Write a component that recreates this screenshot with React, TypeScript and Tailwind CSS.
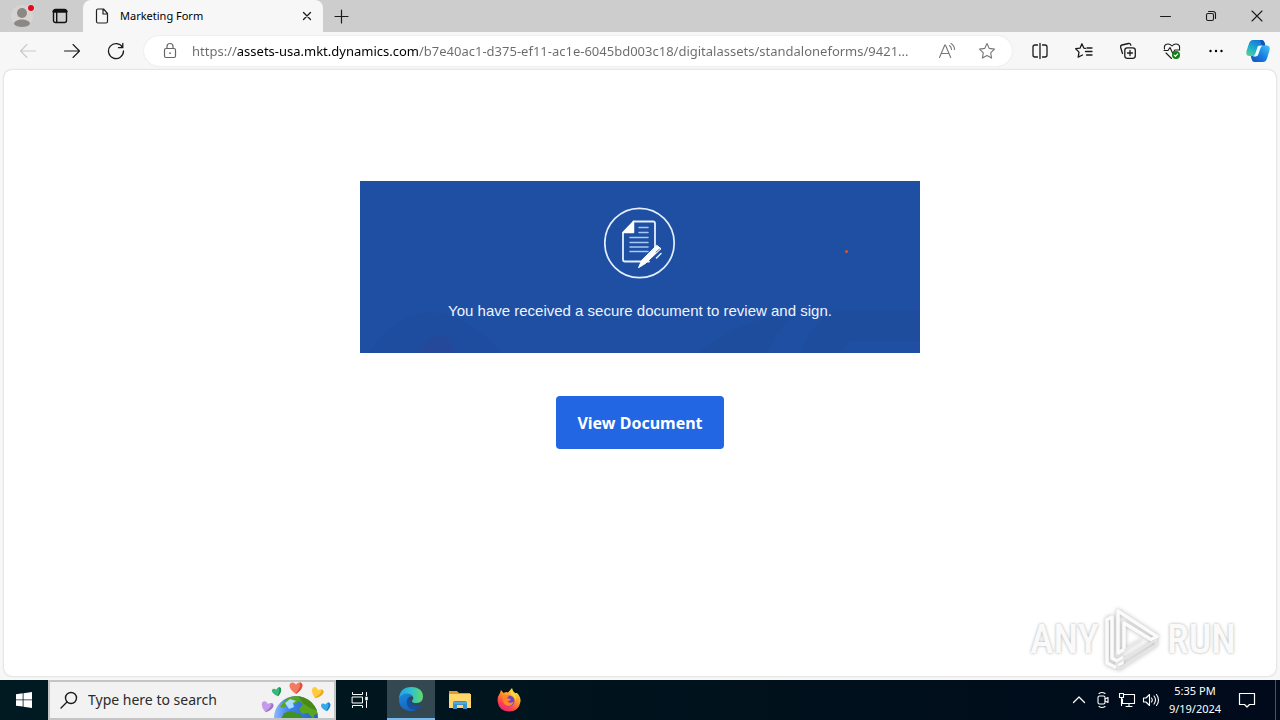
import type { ReactNode } from "react";

function IconButton({ label, className = "w-11", children }: { label: string; className?: string; children: ReactNode }) {
  return (
    <button type="button" aria-label={label} className={`flex h-full shrink-0 items-center justify-center ${className}`}>
      {children}
    </button>
  );
}

function Line({ size = 18, color = "#1b1b1b", width = 1.1, children }: { size?: number; color?: string; width?: number; children: ReactNode }) {
  return (
    <svg width={size} height={size} viewBox={`0 0 ${size} ${size}`} fill="none" stroke={color} strokeWidth={width} strokeLinecap="round" strokeLinejoin="round" aria-hidden="true">
      {children}
    </svg>
  );
}

function TabStrip() {
  return (
    <header className="flex h-8 items-stretch bg-[#cdcdcd]">
      <IconButton label="Profile">
        <svg width="28" height="28" viewBox="0 0 28 28" aria-hidden="true">
          <circle cx="14" cy="14" r="11" fill="#d6d3d1" />
          <circle cx="14" cy="11" r="5" fill="#8c8886" />
          <path d="M6 22c0-6 16-6 16 0c-2 4-14 4-16 0z" fill="#8c8886" />
          <circle cx="23" cy="6" r="3.6" fill="#dedede" />
          <circle cx="23" cy="6" r="3" fill="#e00b1c" />
        </svg>
      </IconButton>
      <IconButton label="Tab actions" className="w-8">
        <Line size={16} width={1.4} color="#111">
          <rect x="1.5" y="1.5" width="13" height="13" rx="2" />
          <path d="M2 3.2h12" strokeWidth="3" />
          <path d="M4.7 4v10" />
        </Line>
      </IconButton>
      <div className="ml-[7px] flex w-60 items-center gap-2.5 rounded-t-lg bg-[#f7f7f7] pl-[11px]">
        <Line size={16} color="#222" width={1.2}>
          <path d="M2.5 2.5q0-1.5 1.5-1.5h5.500l4 4.500v8q0 1.500-1.500 1.500h-8q-1.500 0-1.500-1.500zM9 1v5h4.500" />
        </Line>
        <span className="flex-1 text-[11px] text-black">Marketing Form</span>
        <IconButton label="Close tab" className="w-8">
          <Line size={10} width={1.3}><path d="M1.500 1.500l7 7M8.500 1.500l-7 7" /></Line>
        </IconButton>
      </div>
      <IconButton label="New tab" className="w-9">
        <Line size={15} width={1.2}><path d="M7.500 1v13M1 7.500h13" /></Line>
      </IconButton>
      <div className="flex-1" />
      <IconButton label="Minimize" className="w-[46px]">
        <Line size={11} width={1}><path d="M.5 5.500h10" /></Line>
      </IconButton>
      <IconButton label="Restore" className="w-[46px]">
        <Line size={12}>
          <rect x="1.500" y="3.500" width="7" height="7" rx="1.500" />
          <path d="M3.500 1.500h4.500q2.500 0 2.500 2.500v4.500" />
        </Line>
      </IconButton>
      <IconButton label="Close" className="w-[46px]">
        <Line size={12}><path d="M1 1l10 10M11 1l-10 10" /></Line>
      </IconButton>
    </header>
  );
}

function Copilot() {
  return (
    <svg width="26" height="26" viewBox="0 0 26 26" aria-hidden="true">
      <defs>
        <linearGradient id="cpA" x1="0" y1="1" x2="0.600" y2="0">
          <stop offset="0" stopColor="#63d48a" />
          <stop offset=".45" stopColor="#20b4c6" />
          <stop offset="1" stopColor="#1478d8" />
        </linearGradient>
        <linearGradient id="cpB" x1="0" y1="1" x2="1" y2="0">
          <stop offset="0" stopColor="#124fb8" />
          <stop offset=".5" stopColor="#1880e4" />
          <stop offset="1" stopColor="#45c6f5" />
        </linearGradient>
      </defs>
      <path d="M8 2h8.500q2 0 2.800 2.500l.9 3h-3q-2.200 0-3 2.400l-2 5.600q-.8 2.500-3 2.500H4.500Q.3 18 1.500 13L4 5.500Q5.200 2 8 2z" fill="url(#cpA)" />
      <path d="M18 24H9.500q-2 0-2.800-2.500l-.9-3.500h3.500q2 0 2.900-2.500l2-5.500q.8-2.500 3-2.500h4.300q4.200 0 3 5L22 20.500Q20.800 24 18 24z" fill="url(#cpB)" />
      <path d="M15 2h2q2 0 2.600 2.500l.8 3h-3.600z" fill="#1653b4" />
      <path d="M13.500 7.800h4q-1.600.8-2.200 2.700l-2 6q-.7 1.800-2.600 2H8q1.500-.6 2.200-2.500l2-6q.4-1.600 1.300-2.200z" fill="#f3faff" />
    </svg>
  );
}

const pageUrl = "https://assets-usa.mkt.dynamics.com/b7e40ac1-d375-ef11-ac1e-6045bd003c18/digitalassets/standaloneforms/9421...";

function Toolbar() {
  return (
    <div className="flex h-[38px] items-center pl-1.5 pr-0.5">
      <IconButton label="Back">
        <Line color="#c9c9c9"><path d="M1.500 9h15M8 2.500L1.500 9L8 15.500" /></Line>
      </IconButton>
      <IconButton label="Forward">
        <Line><path d="M1.500 9h15M10 2.500L16.500 9L10 15.500" /></Line>
      </IconButton>
      <IconButton label="Refresh">
        <Line width={1.300}><path d="M15.600 5.500A7.500 7.500 0 1 0 16.500 9M15.800 1.500v4.200h-4.300" /></Line>
      </IconButton>
      <div className="mx-1.5 flex h-[30px] min-w-0 flex-1 items-center gap-3 rounded-full bg-white pl-4 pr-[5px] shadow-[0_0_2px_#dcdcdc]">
        <Line size={20} color="#666" width={1.200}>
          <rect x="4.500" y="7.500" width="11" height="9" rx="1.500" />
          <path d="M7 7.500V5.500a3 3 0 0 1 6 0v2" />
          <path d="M10 12v.2" strokeWidth="1.700" />
        </Line>
        <input
          aria-label="Address"
          readOnly
          value={pageUrl}
          className="h-6 min-w-0 flex-1 bg-[linear-gradient(to_right,#6b6b6b_44px,#000_44px,#000_226px,#6b6b6b_226px)] bg-clip-text text-[13px] text-transparent outline-none"
        />
        <div className="flex h-full">
          <IconButton label="Read aloud" className="w-10">
            <Line color="#777"><path d="M1.500 15.500L6.800 3h.6l5.300 12.500M3.300 11.500h7.600M11.500 3.500q2 1.500 2 4M13 1.500q3.500 2 3.500 6" /></Line>
          </IconButton>
          <IconButton label="Add to favorites" className="w-10">
            <Line color="#777"><path d="M9 1.500l2.300 4.900 5.200.7-3.800 3.700.9 5.300L9 13.600l-4.600 2.500.9-5.300-3.800-3.700 5.200-.7z" /></Line>
          </IconButton>
        </div>
      </div>
      <IconButton label="Split screen">
        <Line width={1.300}><path d="M6.500 3H4q-2 0-2 2v8q0 2 2 2h2.500M9 1.500v15M11.500 3H14q2 0 2 2v8q0 2-2 2h-2.500" /></Line>
      </IconButton>
      <IconButton label="Favorites">
        <Line width={1.300}><path d="M10.500 6.300L8.800 6.100 6.900 1.800 5 6.200l-4.300.5 3.300 3.400-.8 5L7.500 13M12 6h5M10.500 9.500H17M11.500 13H17" /></Line>
      </IconButton>
      <IconButton label="Collections">
        <Line width={1.300}>
          <rect x="5.800" y="5.800" width="10.500" height="10.500" rx="2.500" />
          <path d="M11 8.500v5M8.500 11h5M3.500 11.500L1.700 5.500Q1.200 3.500 3 3l6.500-1.500q1.800-.3 2.400 1.700" />
        </Line>
      </IconButton>
      <IconButton label="Browser essentials">
        <Line>
          <path d="M1.500 7Q.8 3.200 3.500 2.300 6.500 1.300 9 4q2.500-2.700 5.500-1.700 2.700.9 2 4.700M1 8.500h4l2-3 2.800 6 2-3.500h5M3 11l5.500 5.500" />
          <circle cx="13" cy="13" r="4" fill="#128012" stroke="none" />
          <path d="M11.200 13.200l1.200 1.200 2.300-2.500" stroke="#fff" />
        </Line>
      </IconButton>
      <IconButton label="Settings and more">
        <svg width="18" height="4" viewBox="0 0 18 4" aria-hidden="true">
          <circle cx="3.500" cy="2" r="1.200" /><circle cx="9" cy="2" r="1.200" /><circle cx="14.500" cy="2" r="1.200" />
        </svg>
      </IconButton>
      <IconButton label="Copilot" className="w-10"><Copilot /></IconButton>
    </div>
  );
}

function SignIcon() {
  return (
    <svg width="72" height="72" viewBox="0 0 72 72" fill="none" stroke="#e3efff" strokeLinejoin="round" strokeLinecap="round" aria-hidden="true">
      <circle cx="35.500" cy="36" r="34.700" strokeWidth="1.700" />
      <path d="M29.500 14.500H49q2 0 2 2V43M45 54.500H21q-2 0-2-2V26" strokeWidth="1.800" />
      <path d="M19 25.500L29.500 14.500v11z" fill="#fff" stroke="#fff" strokeWidth="1.500" />
      <path d="M35 20.500h9M35 25.500h9M26 30.500h18M26 35.500h18M26 40h18M26 44.500h18" stroke="#a9c8f5" strokeWidth="1.500" />
      <path d="M53 38.500l4 3.200-16 15-6.500 4 3-7z" fill="#fff" stroke="#fff" />
      <path d="M57 46.500l-4.500 4.500" strokeWidth="1.500" />
      <path d="M52 45l3.500-3" stroke="#315da8" strokeWidth=".8" />
    </svg>
  );
}

function Watermark() {
  return (
    <div aria-label="ANY RUN" className="absolute bottom-1 right-10 flex items-center gap-1 font-['Liberation_Sans_Narrow','Roboto_Condensed',sans-serif] text-[40px] font-medium leading-none text-[#fafafa] [text-shadow:0_0_3px_#aaa]">
      <span>ANY</span>
      <svg width="60" height="64" viewBox="0 0 60 64" fill="none" stroke="#fbfbfb" strokeWidth="3.500" strokeLinejoin="round" className="drop-shadow-[0_0_2px_#b0b0b0]" aria-hidden="true">
        <path d="M15 3v42l6-3.500V15l27 16.500 6-3z" />
        <path d="M9 9l-5 2.500V55l8 4 7-4V50l-5 3-5-3z" />
        <path d="M13 56l40-24v5L16 61z" stroke="#e5e5e5" strokeWidth="2.500" />
        <path d="M21 42l18-10.500" stroke="#e8e8e8" strokeWidth="2" />
      </svg>
      <span>RUN</span>
    </div>
  );
}

function Page() {
  return (
    <main className="relative mx-1 mb-1 flex flex-1 flex-col items-center rounded-lg bg-white pt-[111px] shadow-[0_0_2px_#b5b5b5]">
      <section className="relative flex h-[172px] w-full max-w-[560px] flex-col items-center overflow-hidden bg-[#1e4fa2] pt-[26px]">
        <svg className="absolute inset-x-0 bottom-0 h-12 w-full" viewBox="0 0 559 48" preserveAspectRatio="none" aria-hidden="true">
          <path d="M8 48Q40 4 76 8T140 48z" fill="#1d4b9b" opacity=".4" />
          <path d="M60 48q18-36 36 0z" fill="#343f94" opacity=".35" />
          <path d="M410 12q-40 10-74 36h70q8-22 26-36zM440 48q10-30 34-42h85v30h-70l-12 12z" fill="#1d4b98" opacity=".5" />
        </svg>
        <span className="absolute right-[72px] top-[69px] size-[3px] rounded-full bg-[#d0583a]" />
        <div className="relative"><SignIcon /></div>
        <p className="relative mt-5 text-center font-['Liberation_Sans',Arial,sans-serif] text-[15px] leading-6 text-[#eef3ff]">
          You have received a secure document to review and sign.
        </p>
      </section>
      <button type="button" className="mt-[43px] h-[53px] rounded bg-[#2266e3] px-[21px] text-base font-bold text-white">
        View Document
      </button>
      <Watermark />
    </main>
  );
}

function Heart({ x, y, r, s, color, shade }: { x: number; y: number; r: number; s: number; color: string; shade: string }) {
  return (
    <g transform={`translate(${x} ${y}) rotate(${r}) scale(${s})`}>
      <path d="M0 5.500C-8 0-6.500-5-3.300-5-1.200-5 0-3 0-3S1.200-5 3.300-5C6.500-5 8 0 0 5.500z" fill={color} />
      <path d="M0 5.500C8 0 6.500-5 3.300-5 5 0 0 3 0 5.500z" fill={shade} />
    </g>
  );
}

function EarthArt() {
  return (
    <svg width="74" height="38" viewBox="0 0 74 38" className="shrink-0" aria-hidden="true">
      <defs>
        <linearGradient id="sea"><stop offset="0" stopColor="#8eb7ff" /><stop offset=".35" stopColor="#3f82e8" /><stop offset="1" stopColor="#2464bd" /></linearGradient>
        <clipPath id="globe"><circle cx="36" cy="37" r="22" /></clipPath>
      </defs>
      <circle cx="36" cy="37" r="22" fill="url(#sea)" />
      <g clipPath="url(#globe)">
        <path d="M26 18q10-6 22 0 9 7 11 16l-4-1-2 5-5-6-6 1-3-5 4-5-4-3-4 3-6-1-5 5-4-1z" fill="#5aa51f" />
        <path d="M38 15q14 2 20 15l-8-3-7-5z" fill="#478a16" />
        <path d="M24 32l7-2 9 3 4 5H21z" fill="#3f9123" />
        <path d="M25 22l5-4 6 2-3 2 1 4-5 2z" fill="#a9dcff" />
      </g>
      <Heart x={7} y={26} r={15} s={1} color="#c49be8" shade="#9d72c8" />
      <Heart x={17} y={11} r={-15} s={0.8} color="#35b878" shade="#198f58" />
      <Heart x={36} y={7} r={0} s={1.1} color="#f47b62" shade="#dd523f" />
      <Heart x={57} y={12} r={20} s={1} color="#ffcb3d" shade="#eea51c" />
      <Heart x={66} y={26} r={-10} s={0.8} color="#35a8eb" shade="#187bc5" />
    </svg>
  );
}

function EdgeLogo() {
  return (
    <svg width="26" height="26" viewBox="0 0 26 26" aria-hidden="true">
      <defs>
        <linearGradient id="edTop" x1="0" x2="1"><stop offset="0" stopColor="#2c9fe4" /><stop offset=".5" stopColor="#2fc1cf" /><stop offset="1" stopColor="#62dc65" /></linearGradient>
        <linearGradient id="edLow" x1="0" y1="0" x2=".5" y2="1"><stop offset="0" stopColor="#188be0" /><stop offset="1" stopColor="#1764bd" /></linearGradient>
      </defs>
      <path d="M1 13Q1.500 1 13.500 1 25 1.500 25 11q-.5 6-7 6-4 0-4-2c0-1 2-1.500 1-4Q13.500 8 9 8q-5 0-8 5z" fill="url(#edTop)" />
      <path d="M1 13Q3.500 7.500 9 7.500q4 0 5.500 2.500Q9 11 9 16.500q1 7.500 10 7-2.500 1.500-6 1.500Q1 24.500 1 13z" fill="url(#edLow)" />
      <path d="M12.500 10.300Q8.500 12 8.800 16.500C9.500 24 17.500 26.500 23.300 20q1-1.500-.8-.8-5.500 1.800-9-1.500Q10.500 14 12.500 10.300z" fill="#154f9d" />
    </svg>
  );
}

function ExplorerLogo() {
  return (
    <svg width="24" height="22" viewBox="0 0 24 22" aria-hidden="true">
      <path d="M1 2h8l2 2h11v4H1z" fill="#e29a2b" />
      <path d="M1 5h22v14H1z" fill="#ffd76a" />
      <path d="M5 20v-6q0-2 2-2h10q2 0 2 2v6h-4v-4H9v4z" fill="#3a91d0" />
      <path d="M6 14h12" stroke="#70bce8" />
    </svg>
  );
}

function FirefoxLogo() {
  return (
    <svg width="24" height="24" viewBox="0 0 24 24" aria-hidden="true">
      <defs>
        <linearGradient id="fx" x1=".8" y1="0" x2=".2" y2="1"><stop offset="0" stopColor="#fff44f" /><stop offset=".4" stopColor="#ff9a24" /><stop offset=".75" stopColor="#ff3d50" /><stop offset="1" stopColor="#e52187" /></linearGradient>
      </defs>
      <path d="M3 5l1-3 2.500 3L9 4q1 0 2 .5L15 0q.5 3 3 5l2 0q4 4 3.500 8.500Q22 23.500 12 23.500T.5 13Q.5 8 3 5z" fill="url(#fx)" />
      <circle cx="12" cy="13" r="5.500" fill="#7540cf" />
      <path d="M6 8q3-2 6 0-2 1-1.500 2.500L14 11q-1 2-3.500 2.200Q13 16 17 13.500 15 18.500 11 18 5 17 6 8z" fill="#ff8825" />
      <path d="M14 3q6 4 5 10-1-5-5-6.500z" fill="#ffdf3d" />
    </svg>
  );
}

function Taskbar() {
  return (
    <footer className="flex h-10 items-stretch bg-linear-to-r from-[#001a22] via-[#00131d] to-[#000a1b] text-white">
      <IconButton label="Start" className="w-12">
        <svg width="16" height="16" viewBox="0 0 16 16" fill="#fff" aria-hidden="true">
          <path d="M0 2.300L6.700 1.300V7.500H0zM7.500 1.200L16 0v7.500H7.500zM0 8.300h6.700v6.300L0 13.700zM7.500 8.300H16V16l-8.500-1.200z" />
        </svg>
      </IconButton>
      <label className="flex w-72 items-center overflow-hidden border-2 border-[#c4c4c4] bg-[#f2f2f2] pl-2.5">
        <Line size={18} width={1.400}><circle cx="11" cy="7" r="5.500" /><path d="M7 11l-6 6" /></Line>
        <input aria-label="Search" placeholder="Type here to search" className="ml-2.5 min-w-0 flex-1 bg-transparent text-sm text-black outline-none placeholder:text-[#2b2b2b]" />
        <EarthArt />
      </label>
      <IconButton label="Task view" className="w-12">
        <Line size={18} color="#fff" width={1}>
          <path d="M1.500 1.500v2h10v-2M1.500 16.500v-2h10v2M15.500 1.500v3M15.500 10v6.500" />
          <rect x="1.500" y="6" width="10" height="6" />
          <path d="M15.500 7v1" strokeWidth="2.500" strokeLinecap="square" />
        </Line>
      </IconButton>
      <div className="ml-[3px] flex gap-px">
        <IconButton label="Microsoft Edge" className="w-12 border-b-2 border-[#76b9ed] bg-[#334850]"><EdgeLogo /></IconButton>
        <IconButton label="File Explorer" className="w-12"><ExplorerLogo /></IconButton>
        <IconButton label="Firefox" className="w-12"><FirefoxLogo /></IconButton>
      </div>
      <div className="flex-1" />
      <IconButton label="Show hidden icons" className="w-6">
        <Line size={14} color="#fff" width={1.300}><path d="M1.500 9.500L7 4l5.500 5.500" /></Line>
      </IconButton>
      <IconButton label="Meet now" className="w-6">
        <Line size={18} color="#fff">
          <rect x="4" y="5" width="7" height="8" rx="1.500" />
          <path d="M11 8l3-1.500v5L11 10M5 2.500q3-2 6 0M5 15.500q3 2 6 0" />
        </Line>
      </IconButton>
      <IconButton label="Network" className="w-6">
        <Line size={18} color="#fff">
          <path d="M6 3.500h10.500v9H4.500V8M8 15.500h6M11 12.500v3M1.500 2.500h4v4h-4zM3.500 6.500v8" />
        </Line>
      </IconButton>
      <IconButton label="Volume" className="w-6">
        <Line size={18} color="#fff">
          <path d="M1.500 7h2.500l3.500-3.500v11L4 11H1.500zM9.500 7q1.500 2 0 4M12 5q3 4 0 8M14.500 3.500q4 5.500 0 11" />
        </Line>
      </IconButton>
      <button type="button" className="flex w-16 flex-col items-center justify-center text-[11px] leading-[18px]">
        <time>5:35 PM</time>
        <time>9/19/2024</time>
      </button>
      <IconButton label="Notifications" className="w-10">
        <Line size={18} color="#fff" width={1.200}><path d="M1.500 2.500h15v11h-5L9 16l-2.500-2.500h-5z" /></Line>
      </IconButton>
      <button type="button" aria-label="Show desktop" className="ml-2 w-[5px] border-l border-[#4b545e]" />
    </footer>
  );
}

export default function App() {
  return (
    <div className="flex min-h-screen flex-col bg-[#f7f7f7] font-['Noto_Sans','Open_Sans',sans-serif]">
      <TabStrip />
      <Toolbar />
      <Page />
      <Taskbar />
    </div>
  );
}
